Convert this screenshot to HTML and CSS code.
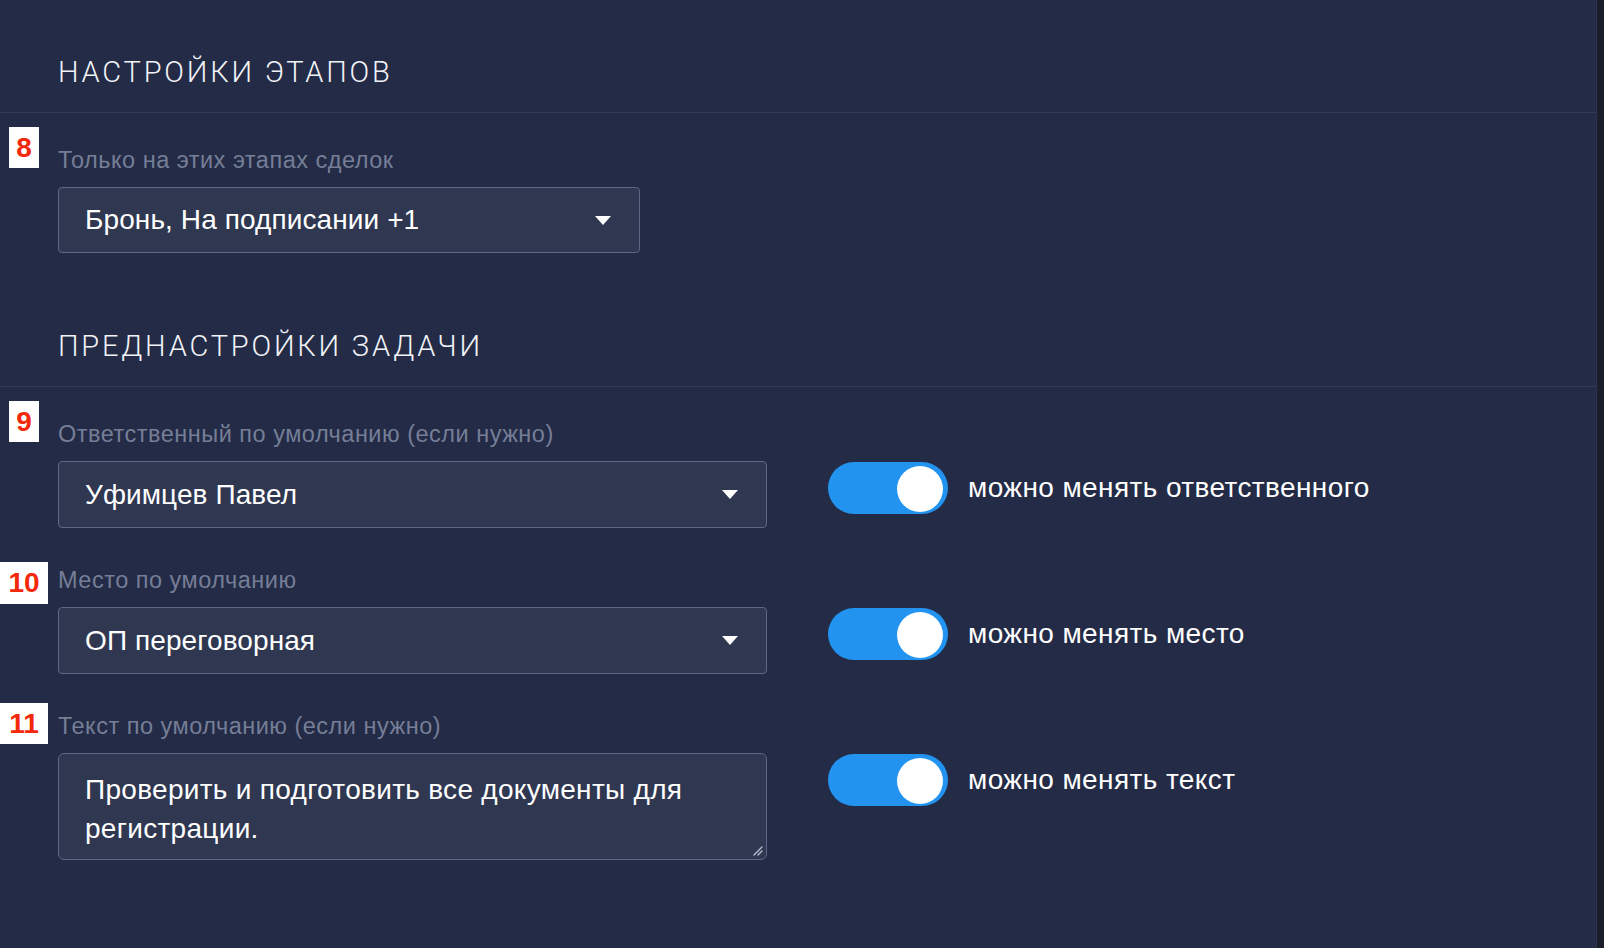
FILE: index.html
```html
<!DOCTYPE html>
<html lang="ru">
<head>
    <meta charset="UTF-8">
    <title>Настройки этапов</title>
    <link rel="stylesheet" href="styles.css">
</head>
<body>
    <div class="panel">
        <div class="section-title"><h2>Настройки этапов</h2></div>

        <div class="field">
            <span class="badge badge-hi">8</span>
            <div class="field-label">Только на этих этапах сделок</div>
            <div class="select select-short">
                <span>Бронь, На подписании +1</span>
                <span class="caret"></span>
            </div>
        </div>

        <div class="section-title section-gap"><h2>Преднастройки задачи</h2></div>

        <div class="field">
            <span class="badge badge-hi">9</span>
            <div class="field-label">Ответственный по умолчанию (если нужно)</div>
            <div class="field-row">
                <div class="select">
                    <span>Уфимцев Павел</span>
                    <span class="caret"></span>
                </div>
                <div class="toggle-group">
                    <span class="toggle on"><span class="knob"></span></span>
                    <span class="toggle-label">можно менять ответственного</span>
                </div>
            </div>
        </div>

        <div class="field">
            <span class="badge badge-wide badge-lo">10</span>
            <div class="field-label">Место по умолчанию</div>
            <div class="field-row">
                <div class="select">
                    <span>ОП переговорная</span>
                    <span class="caret"></span>
                </div>
                <div class="toggle-group">
                    <span class="toggle on"><span class="knob"></span></span>
                    <span class="toggle-label">можно менять место</span>
                </div>
            </div>
        </div>

        <div class="field">
            <span class="badge badge-wide badge-mid">11</span>
            <div class="field-label">Текст по умолчанию (если нужно)</div>
            <div class="field-row">
                <div class="textarea">
                    Проверить и подготовить все документы для регистрации.
                    <svg class="grip" width="12" height="12" viewBox="0 0 12 12">
                        <path d="M11 3 L3 11 M11 7 L7 11" stroke="#b9bfcf" stroke-width="1.4" stroke-linecap="round"/>
                    </svg>
                </div>
                <div class="toggle-group">
                    <span class="toggle on"><span class="knob"></span></span>
                    <span class="toggle-label">можно менять текст</span>
                </div>
            </div>
        </div>
    </div>
</body>
</html>
```

FILE: styles.css
```css
* {
    box-sizing: border-box;
    margin: 0;
    padding: 0;
}

body {
    background-color: #1a1e28;
    font-family: "Liberation Sans", Arial, sans-serif;
    color: #fff;
}

.panel {
    width: 1597px;
    min-height: 948px;
    background-color: #232b46;
    border-right: 1px solid #2c3450;
}

.section-title {
    height: 113px;
    padding: 55px 0 0 58px;
    border-bottom: 1px solid #323b57;
}

.section-gap {
    margin-top: 21px;
}

.section-title h2 {
    font-family: Roboto, "Liberation Sans", sans-serif;
    font-weight: 300;
    font-size: 29px;
    line-height: 34px;
    letter-spacing: 2.8px;
    text-transform: uppercase;
    color: #f2f3f7;
}

.field {
    position: relative;
    padding-left: 58px;
    margin-top: 32px;
}

.section-gap + .field {
    margin-top: 32px;
}

.field + .field {
    margin-top: 37px;
}

.field-label {
    font-size: 23.5px;
    line-height: 30px;
    letter-spacing: 0.5px;
    color: #767e97;
    margin-bottom: 12px;
}

.badge {
    position: absolute;
    left: 9px;
    top: -17px;
    width: 30px;
    height: 43px;
    background-color: #fff;
    color: #f2290a;
    font-weight: 700;
    font-size: 28px;
    display: flex;
    align-items: center;
    justify-content: center;
}

.badge-hi { top: -18px; height: 41px; }
.badge-mid { top: -8px; height: 41px; }
.badge-lo { top: -3px; height: 42px; }
.badge-wide { left: 0; width: 48px; }

.field-row {
    display: flex;
    align-items: flex-start;
    gap: 61px;
}

.select {
    width: 709px;
    height: 67px;
    display: flex;
    align-items: center;
    justify-content: space-between;
    padding: 0 28px 0 26px;
    background-color: #2f3751;
    border: 1.5px solid #5d6787;
    border-radius: 4px;
    font-size: 28px;
    letter-spacing: 0.1px;
}

.select-short {
    width: 582px;
    height: 66px;
}

.caret {
    width: 0;
    height: 0;
    border-left: 8px solid transparent;
    border-right: 8px solid transparent;
    border-top: 9px solid #fff;
}

.textarea {
    position: relative;
    width: 709px;
    height: 107px;
    padding: 16px 28px 0 26px;
    background-color: #2f3751;
    border: 1.5px solid #5d6787;
    border-radius: 6px;
    font-size: 28px;
    letter-spacing: 0.3px;
    line-height: 39px;
}

.grip {
    position: absolute;
    right: 3px;
    bottom: 3px;
}

.toggle-group {
    display: flex;
    align-items: center;
    gap: 20px;
    margin-top: 1px;
}

.toggle {
    position: relative;
    width: 120px;
    height: 52px;
    border-radius: 26px;
    background-color: #2393f0;
    flex-shrink: 0;
}

.knob {
    position: absolute;
    top: 4px;
    right: 5px;
    width: 46px;
    height: 46px;
    border-radius: 50%;
    background-color: #fff;
}

.toggle-label {
    font-size: 28px;
    letter-spacing: 0.4px;
    color: #fff;
}
```
